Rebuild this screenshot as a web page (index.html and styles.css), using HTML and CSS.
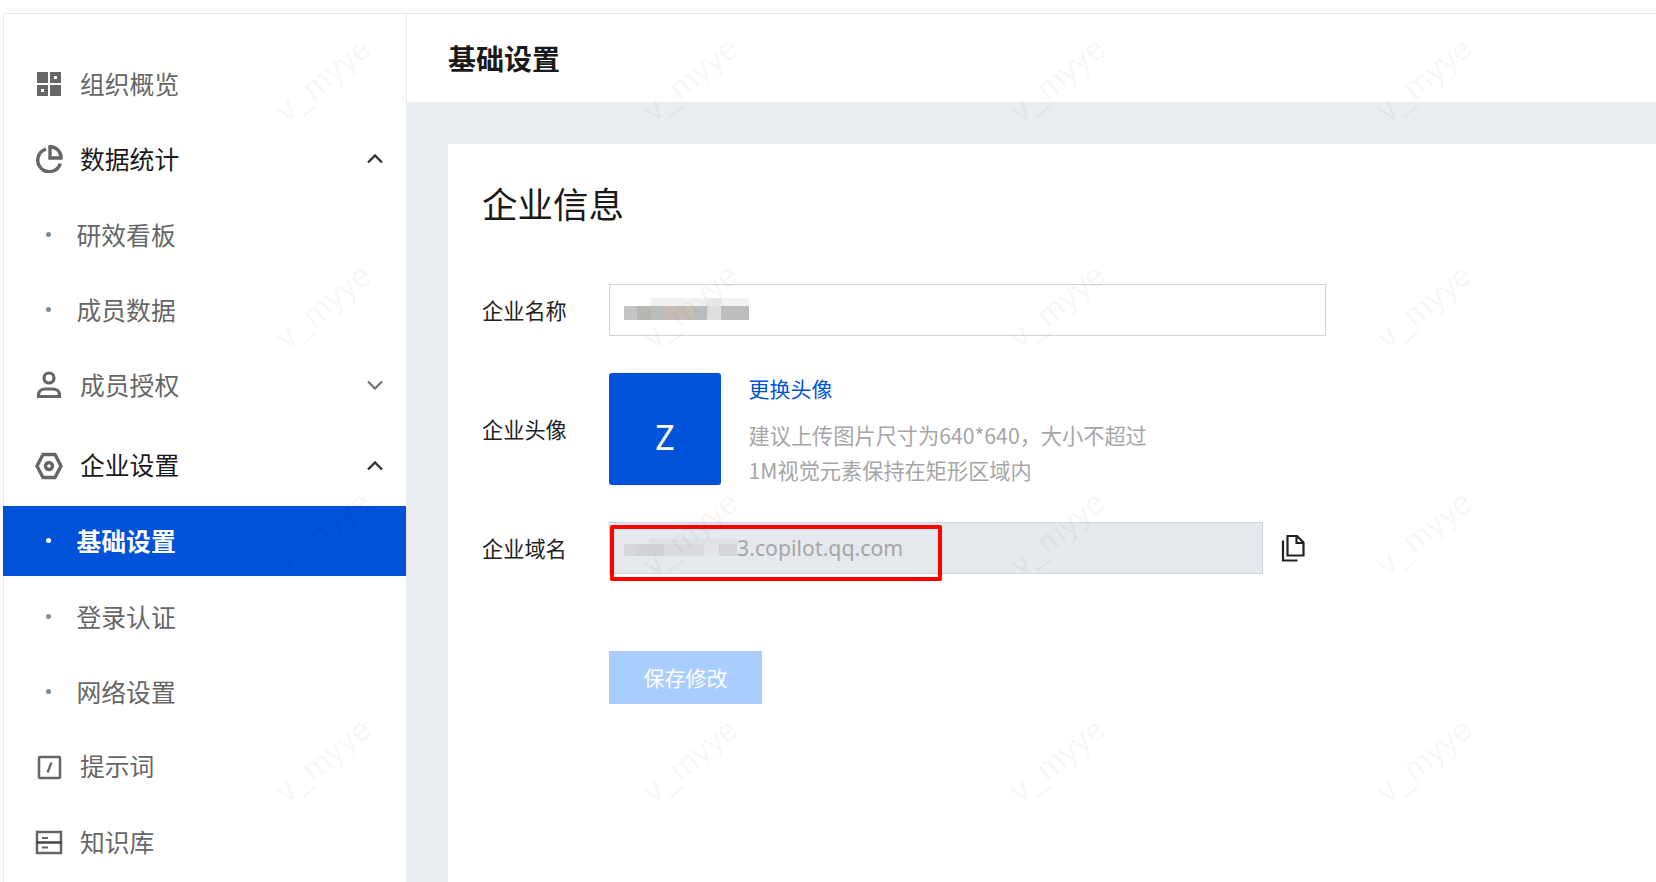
FILE: index.html
```html
<!DOCTYPE html>
<html lang="zh-CN">
<head>
<meta charset="utf-8">
<title>基础设置</title>
<link rel="stylesheet" href="styles.css">
</head>
<body>
<div class="app">
  <div class="topline"></div>
  <div class="shell">
    <nav class="sidebar">
      <div class="item">
        <svg class="icon" viewBox="0 0 28 28"><path fill="#666" fill-rule="evenodd" d="M2 2h11v11H2zM15 2h11v11H15zM19 6v3h3V6zM2 15h11v11H2zM6 19v3h3v-3zM15 15h11v11H15z"/></svg>
        <span class="label">组织概览</span>
      </div>
      <div class="item open">
        <svg class="icon" viewBox="0 0 28 28"><g fill="none" stroke="#666" stroke-width="3.400"><path d="M11 4.200A11.500 11.500 0 1 0 25.300 18.500"/><path d="M15 1.700A10.800 10.800 0 0 1 26 13H15z"/></g></svg>
        <span class="label">数据统计</span>
        <svg class="chev" viewBox="0 0 16 10"><path d="M1 8.500l7-7 7 7"/></svg>
      </div>
      <div class="item sub"><i class="dot"></i><span class="label">研效看板</span></div>
      <div class="item sub"><i class="dot"></i><span class="label">成员数据</span></div>
      <div class="item">
        <svg class="icon" viewBox="0 0 28 28"><g fill="none" stroke="#666" stroke-width="3.200"><circle cx="14" cy="7" r="5"/><path d="M3.500 25.500v-1.500c0-4 3-6 7-6h7c4 0 7 2 7 6v1.500z"/></g></svg>
        <span class="label">成员授权</span>
        <svg class="chev muted" viewBox="0 0 16 10"><path d="M1 1.500l7 7 7-7"/></svg>
      </div>
      <div class="item open gap">
        <svg class="icon" viewBox="0 0 28 28"><g fill="none" stroke="#666" stroke-width="3.400"><path d="M8 2.500h12L26 14l-6 11.500H8L2 14z"/><circle cx="14" cy="14" r="3.500"/></g></svg>
        <span class="label">企业设置</span>
        <svg class="chev" viewBox="0 0 16 10"><path d="M1 8.500l7-7 7 7"/></svg>
      </div>
      <div class="item sub active"><i class="dot"></i><span class="label">基础设置</span></div>
      <div class="item sub"><i class="dot"></i><span class="label">登录认证</span></div>
      <div class="item sub"><i class="dot"></i><span class="label">网络设置</span></div>
      <div class="item">
        <svg class="icon" viewBox="0 0 28 28"><g fill="none" stroke="#666"><rect x="4" y="4" width="21" height="21" rx="1" stroke-width="2.500"/><path d="M16.500 9.500l-4 10" stroke-width="2.200"/></g></svg>
        <span class="label">提示词</span>
      </div>
      <div class="item">
        <svg class="icon" viewBox="0 0 28 28"><g fill="none" stroke="#666" stroke-width="2.500"><rect x="2" y="4" width="24" height="21"/><path d="M1 14.500h26" stroke="#444"/><path d="M7 10h6M7 19.500h6" stroke-width="2"/></g></svg>
        <span class="label">知识库</span>
      </div>
    </nav>
    <main class="main">
      <header class="header">基础设置</header>
      <section class="card">
        <h1 class="title">企业信息</h1>
        <div class="row row-name">
          <label class="field-label">企业名称</label>
          <div class="input input-name"><span class="mosaic mosaic-name"></span></div>
        </div>
        <div class="row row-avatar">
          <label class="field-label">企业头像</label>
          <div class="avatar">Z</div>
          <div class="avatar-side">
            <a class="link">更换头像</a>
            <p class="hint">建议上传图片尺寸为640*640，大小不超过<br>1M视觉元素保持在矩形区域内</p>
          </div>
        </div>
        <div class="row row-domain">
          <label class="field-label">企业域名</label>
          <div class="input input-domain">
            <span class="mosaic mosaic-domain"></span><span class="domain-text">3.copilot.qq.com</span>
            <span class="redbox"></span>
          </div>
          <svg class="copy" viewBox="0 0 24 28"><g fill="none" stroke="#222" stroke-width="2.200"><path d="M6.500 2h9.500l6.500 6.500V21.500H6.500z"/><path d="M15.500 2v7h7"/><path d="M2 6.500V26.500h14.500"/></g></svg>
        </div>
        <button class="save" type="button">保存修改</button>
      </section>
    </main>
  </div>
  <div class="watermarks" aria-hidden="true">
    <span>v_myye</span><span>v_myye</span><span>v_myye</span><span>v_myye</span>
    <span>v_myye</span><span>v_myye</span><span>v_myye</span><span>v_myye</span>
    <span>v_myye</span><span>v_myye</span><span>v_myye</span><span>v_myye</span>
    <span>v_myye</span><span>v_myye</span><span>v_myye</span><span>v_myye</span>
  </div>
</div>
</body>
</html>
```
FILE: styles.css
```css
* { box-sizing: border-box; }
html, body { margin: 0; height: 100%; background: #fff; }
body { font-family: "Noto Sans CJK SC", "Noto Sans", sans-serif; color: #1a1a1a; }
.app { position: relative; width: 1656px; height: 882px; overflow: hidden; display: flex; flex-direction: column; padding-left: 3px; }
.topline { height: 14px; flex: none; border-bottom: 1px solid #e8e8e8; }
.shell { flex: 1; display: flex; min-height: 0; }

.sidebar { width: 404px; flex: none; padding-top: 35px; border-left: 1px solid #ececec; border-right: 1px solid #e9edf2; }
.item { height: 70px; margin-bottom: 5.3px; display: flex; align-items: center; padding-left: 31px; padding-right: 23.5px; font-size: 24.8px; color: #666; }
.item .label { margin-left: 17px; flex: 1; padding-bottom: 3px; }
.item.open { color: #1a1a1a; }
.item.gap { margin-top: 10.5px; }
.icon { width: 28px; height: 28px; flex: none; }
.chev { width: 16px; height: 10px; flex: none; fill: none; stroke: #333; stroke-width: 2.400; }
.chev.muted { stroke: #777; }
.item.sub { padding-left: 42px; }
.item.sub .label { margin-left: 25.5px; padding-bottom: 1px; }
.dot { width: 5px; height: 5px; border-radius: 50%; background: #7f8c99; flex: none; }
.item.active { background: #0052d9; color: #fff; font-weight: 700; width: 403px; margin-left: -1px; padding-left: 43px; }
.item.active .dot { background: #fff; }

.main { flex: 1; min-width: 0; display: flex; flex-direction: column; background: #e9edf2; }
.header { height: 88px; flex: none; background: #fff; padding-left: 41px; padding-top: 21px; font-size: 28px; line-height: 46px; font-weight: 700; color: #1a1a1a; }
.card { flex: 1; margin-top: 42px; margin-left: 41px; background: #fff; padding: 34px 34px 0; }
.title { margin: 0; font-size: 35.500px; font-weight: 400; line-height: 50px; color: #1a1a1a; }

.row { display: flex; align-items: center; position: relative; }
.field-label { width: 127px; flex: none; font-size: 21.200px; color: #222; padding-bottom: 2px; }
.row-name { margin-top: 56px; }
.row-avatar { margin-top: 35px; }
.row-domain { margin-top: 35px; }
.input { height: 52px; border: 1px solid #ced4de; display: flex; align-items: center; padding-left: 14px; position: relative; }
.input-name { width: 717px; }
.input-domain { width: 654px; background: #e5e8ed; color: #a6a6a6; font-size: 21.300px; font-family: "Noto Sans", sans-serif; padding-bottom: 1px; }
.mosaic { display: block; flex: none; }
.mosaic-name { width: 125px; height: 22px; margin-top: -3px; background:
  linear-gradient(90deg, transparent 0 27px, #efefef 27px 60px, #f4f2f0 60px 83px, #e8e8e8 83px 97px, #f2f2f2 97px) top / 100% 8px no-repeat,
  linear-gradient(90deg, #c4c4c4 0 13px, #b8b6b2 13px 27px, #bcbcbc 27px 41px, #c6beb6 41px 70px, #b8bcbc 70px 83px, #dedede 83px 97px, #bdbdbd 97px) bottom / 100% 14px no-repeat; }
.mosaic-domain { width: 113px; height: 17px; margin-top: -1px; background:
  linear-gradient(90deg, transparent 0 25px, #dfe1e6 25px) top / 100% 5px no-repeat,
  linear-gradient(90deg, #d5d7db 0 12px, #d1d3d7 12px 25px, #cfd1d5 25px 40px, #d9dbdf 40px 80px, #e2e4e9 80px 95px, #d4d6da 95px) bottom / 100% 12px no-repeat; }
.domain-text { margin-left: 0; }
.redbox { position: absolute; left: 0; top: 2px; width: 332px; height: 56px; border: 4px solid #f00; border-radius: 2px; }

.avatar { width: 112px; height: 112px; flex: none; border-radius: 3px; background: #0052d9; color: #fff; font-size: 34px; display: flex; align-items: center; justify-content: center; font-family: "Noto Sans", sans-serif; padding-top: 16px; }
.avatar-side { margin-left: 27.500px; align-self: flex-start; }
.link { display: block; font-size: 21px; line-height: 34px; color: #0052d9; }
.hint { margin: 12px 0 0; font-size: 21.200px; line-height: 35px; color: #a6a6a6; }

.copy { width: 24px; height: 28px; margin-left: 18px; flex: none; }
.save { display: block; margin: 77px 0 0 127px; width: 153px; height: 53px; border: 0; border-radius: 0; background: #a9cdff; color: #fff; font-size: 21px; font-family: inherit; padding: 0 0 2px; }

.watermarks { position: absolute; left: 140px; top: -34px; display: grid; grid-template-columns: repeat(4, 367px); grid-auto-rows: 227px; pointer-events: none; font-family: "Liberation Sans", sans-serif; font-size: 32.500px; color: rgba(0, 0, 0, .05); }
.watermarks span { display: flex; align-items: center; justify-content: center; transform: rotate(-39deg); }
```
